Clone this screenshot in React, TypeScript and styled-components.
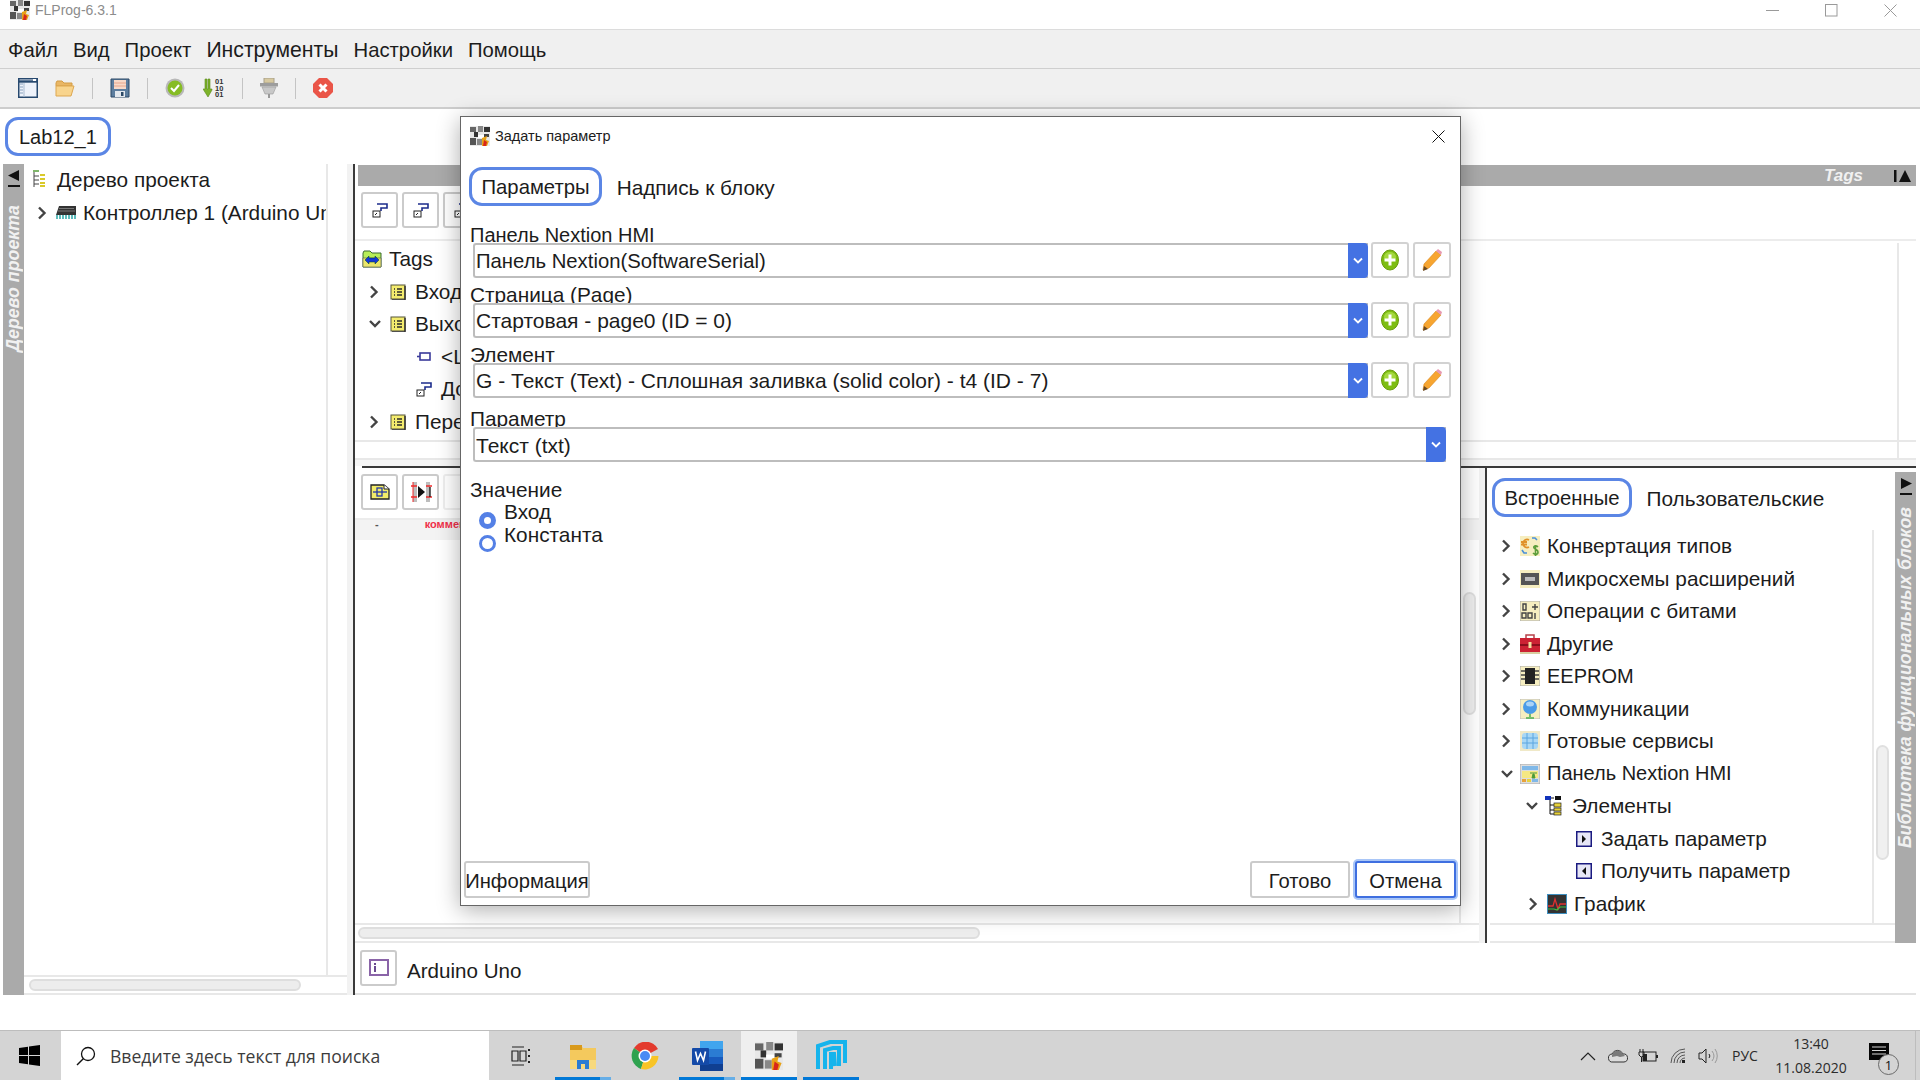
import React from "react";
import styled, { createGlobalStyle } from "styled-components";

const GlobalStyle = createGlobalStyle`
	html, body {
		margin: 0;
		padding: 0;
		background: #fff;
	}
	* {
		box-sizing: border-box;
	}
`;

const uiFont = `"Liberation Sans", Arial, sans-serif`;
const winFont = `"Open Sans", "Noto Sans", sans-serif`;

const Page = styled.div`
	position: relative;
	width: 1920px;
	height: 1080px;
	overflow: hidden;
	display: flex;
	flex-direction: column;
	background: #fff;
	font-family: ${uiFont};
	font-size: 20.8px;
	color: #1c1c1c;
`;

/* window chrome */
const TitleBar = styled.div`
	height: 29px;
	display: flex;
	align-items: flex-start;
	padding-left: 10px;
	flex-shrink: 0;
`;
const TitleText = styled.span`
	margin-left: 5px;
	font-size: 14px;
	line-height: 20px;
	color: #8c8c8c;
`;
const Caption = styled.div`
	margin-left: auto;
	display: flex;
	height: 20px;
	padding-top: 4px;
	padding-right: 23px;
	gap: 46px;
`;
const MenuBar = styled.div`
	height: 40px;
	flex-shrink: 0;
	display: flex;
	align-items: center;
	gap: 15px;
	padding: 2px 0 0 8px;
	background: #f0f0f0;
	border-top: 1px solid #dcdcdc;
	border-bottom: 1px solid #cfcfcf;
`;
const MenuItem = styled.span<{ $wide?: boolean }>`
	font-size: ${(p) => (p.$wide ? "21.2px" : "20.3px")};
`;
const ToolBar = styled.div`
	height: 40px;
	flex-shrink: 0;
	display: flex;
	align-items: center;
	gap: 17.1px;
	padding: 0 0 0 18px;
	background: #f0f0f0;
	border-bottom: 2px solid #cdcdcd;
`;
const ToolSep = styled.div`
	width: 1px;
	height: 21px;
	background: #c4c4c4;
`;
const ProjectTabs = styled.div`
	height: 55px;
	flex-shrink: 0;
	padding: 8px 0 0 5px;
`;
const Pill = styled.div<{ $active?: boolean }>`
	display: inline-flex;
	align-items: center;
	height: 39px;
	padding: 2px 9.5px 0;
	border: 3px solid ${(p) => (p.$active ? "#5b86e5" : "transparent")};
	border-radius: 13px;
	background: #fff;
	font-size: ${(p) => (p.$active ? "20.3px" : "inherit")};
	white-space: nowrap;
`;
const ProjectPill = styled(Pill)`
	padding: 2px 11px 0;
	font-size: 20px;
`;

/* main area */
const Workspace = styled.div`
	height: 832px;
	flex-shrink: 0;
	display: flex;
	padding: 0 4px 1px 3px;
`;
const SideStrip = styled.div<{ $inset?: number }>`
	width: 21px;
	flex-shrink: 0;
	margin-top: ${(p) => p.$inset ?? 0}px;
	display: flex;
	flex-direction: column;
	align-items: center;
	background: #aaaaaa;
	padding-top: 5px;
`;
const StripText = styled.div<{ $gap: number }>`
	margin-top: ${(p) => p.$gap}px;
	writing-mode: vertical-rl;
	transform: rotate(180deg);
	font-size: 17.8px;
	font-weight: bold;
	font-style: italic;
	line-height: 21px;
	color: #f1f1f1;
	white-space: nowrap;
`;
const LeftPane = styled.div`
	width: 323px;
	flex-shrink: 0;
	display: flex;
	flex-direction: column;
`;
const LeftBody = styled.div`
	flex: 1;
	display: flex;
	min-height: 0;
`;
const TreeList = styled.div`
	flex: 1;
	min-width: 0;
	overflow: hidden;
`;
const VTrack = styled.div<{ $w: number }>`
	width: ${(p) => p.$w}px;
	flex-shrink: 0;
	border-left: 2px solid #e8e8e8;
	padding-left: 2px;
`;
const VThumb = styled.div<{ $top: number; $h: number }>`
	margin-top: ${(p) => p.$top}px;
	width: 13px;
	height: ${(p) => p.$h}px;
	background: #f0f0f0;
	border: 2px solid #e0e0e0;
	border-radius: 7px;
`;
const LeftFoot = styled.div`
	height: 20px;
	flex-shrink: 0;
	display: flex;
	border-top: 2px solid #e8e8e8;
	border-bottom: 2px solid #e8e8e8;
	padding-left: 5px;
`;
const HThumb = styled.div<{ $w: number }>`
	width: ${(p) => p.$w}px;
	height: 12px;
	margin-top: 2px;
	background: #ededed;
	border: 2px solid #dedede;
	border-radius: 7px;
`;
const GutterGap = styled.div`
	width: 6px;
	flex-shrink: 0;
	background: #f2f2f2;
`;
const DarkLine = styled.div`
	width: 2px;
	flex-shrink: 0;
	background: #3a3a3a;
`;
const Center = styled.div`
	flex: 1;
	min-width: 0;
	display: flex;
	flex-direction: column;
`;
const GrayHeader = styled.div`
	height: 21px;
	flex-shrink: 0;
	margin: 1px 0 0 3px;
	display: flex;
	align-items: center;
	justify-content: flex-end;
	gap: 31px;
	padding-right: 4px;
	background: #aaaaaa;
`;
const HeaderTitle = styled.span`
	font-size: 17px;
	font-weight: bold;
	font-style: italic;
	color: #f1f1f1;
`;
const ButtonRow = styled.div<{ $h: number }>`
	height: ${(p) => p.$h}px;
	flex-shrink: 0;
	display: flex;
	gap: 4px;
	padding: 6px 0 0 6px;
	border-bottom: 2px solid #ececec;
`;
const SquareButton = styled.div<{ $faint?: boolean }>`
	width: 37px;
	height: 36px;
	display: flex;
	align-items: center;
	justify-content: center;
	background: #fff;
	border: 2px solid ${(p) => (p.$faint ? "#eeeeee" : "#cbcbcb")};
	border-radius: 3px;
`;
const TagsBody = styled.div`
	height: 199px;
	flex-shrink: 0;
	display: flex;
	padding-top: 2px;
`;
const TagsFoot = styled.div`
	height: 20px;
	flex-shrink: 0;
	display: flex;
	justify-content: flex-end;
	border-top: 2px solid #e8e8e8;
	border-bottom: 2px solid #e8e8e8;
`;
const FootCell = styled.div`
	width: 19px;
	border-left: 2px solid #e8e8e8;
`;
const ThinGap = styled.div`
	height: 6px;
	flex-shrink: 0;
	background: #f6f6f6;
`;
const ThickLine = styled.div`
	height: 2px;
	flex-shrink: 0;
	margin-left: 7px;
	background: #3a3a3a;
`;
const Lower = styled.div`
	flex: 1;
	min-height: 0;
	display: flex;
`;
const Editor = styled.div`
	width: 1124px;
	flex-shrink: 0;
	display: flex;
	flex-direction: column;
`;
const CommentBand = styled.div`
	height: 20px;
	flex-shrink: 0;
	display: flex;
	gap: 46px;
	padding-left: 20px;
	overflow: hidden;
	background: #f3f3f3;
	font-size: 11px;
	font-weight: bold;
	line-height: 8px;
	color: #f0304a;
`;
const Dash = styled.span`
	color: #555;
`;
const EditorCanvas = styled.div`
	flex: 1;
	min-height: 0;
	display: flex;
	justify-content: flex-end;
`;
const EditorFoot = styled.div`
	height: 20px;
	flex-shrink: 0;
	padding-left: 3px;
	border-top: 2px solid #e8e8e8;
	border-bottom: 2px solid #e8e8e8;
`;
const Library = styled.div`
	flex: 1;
	min-width: 0;
	display: flex;
	padding-left: 3px;
`;
const LibraryMain = styled.div`
	flex: 1;
	min-width: 0;
	display: flex;
	flex-direction: column;
`;
const TabRow = styled.div<{ $left: number; $top: number }>`
	display: flex;
	gap: 2px;
	padding: ${(p) => p.$top}px 0 0 ${(p) => p.$left}px;
	flex-shrink: 0;
`;
const LibraryBody = styled.div`
	flex: 1;
	min-height: 0;
	margin-top: 13px;
	display: flex;
`;
const LibraryFoot = styled.div`
	height: 20px;
	flex-shrink: 0;
	border-top: 2px solid #e8e8e8;
	border-bottom: 2px solid #e8e8e8;
`;
const ArduinoRow = styled.div`
	height: 52px;
	flex-shrink: 0;
	display: flex;
	align-items: center;
	gap: 10px;
	padding-left: 5px;
	border-bottom: 2px solid #e2e2e2;
`;
const ArduinoLabel = styled.span`
	padding-top: 6px;
	font-size: 20.6px;
`;
const Blank = styled.div`
	height: 34px;
	flex-shrink: 0;
`;

/* tree rows */
const Row = styled.div<{ $indent: number }>`
	height: 32.5px;
	display: flex;
	align-items: center;
	padding-left: ${(p) => p.$indent}px;
	white-space: nowrap;
`;
const ChevronSlot = styled.span`
	width: 19px;
	flex-shrink: 0;
	display: flex;
	align-items: center;
`;
const IconSlot = styled.span`
	width: 20px;
	height: 20px;
	flex-shrink: 0;
	display: flex;
	align-items: center;
	justify-content: center;
`;
const RowLabel = styled.span<{ $narrow?: boolean }>`
	margin-left: 7px;
	font-size: ${(p) => (p.$narrow ? "20px" : "inherit")};
`;

/* dialog */
const Dialog = styled.div`
	position: absolute;
	left: 460px;
	top: 116px;
	width: 1001px;
	height: 790px;
	display: flex;
	flex-direction: column;
	background: #fff;
	border: 1px solid #666;
	box-shadow: 0 4px 22px rgba(0, 0, 0, 0.32);
`;
const DialogTitle = styled.div`
	height: 38px;
	flex-shrink: 0;
	display: flex;
	align-items: center;
	padding: 0 15px 0 9px;
	font-size: 14.5px;
`;
const DialogTitleText = styled.span`
	margin-left: 5px;
`;
const CloseX = styled.span`
	margin-left: auto;
	display: flex;
`;
const ParamBlock = styled.div<{ $gap: number }>`
	margin-top: ${(p) => p.$gap}px;
	padding-left: 9px;
`;
const ParamLabel = styled.div<{ $narrow?: boolean }>`
	height: 25px;
	line-height: 34px;
	overflow: hidden;
	font-size: ${(p) => (p.$narrow ? "20px" : "inherit")};
	white-space: nowrap;
`;
const ParamRow = styled.div<{ $right: number }>`
	display: flex;
	gap: 3px;
	margin-left: 3px;
	padding-right: ${(p) => p.$right}px;
`;
const ComboBox = styled.div`
	flex: 1;
	min-width: 0;
	height: 35px;
	display: flex;
	align-items: center;
	padding-left: 1px;
	background: #fff;
	border: 2px solid #bdbdbd;
	border-right: none;
	border-radius: 3px 0 0 3px;
	white-space: nowrap;
`;
const ComboText = styled.span<{ $narrow?: boolean; $low?: boolean }>`
	padding-top: ${(p) => (p.$low ? "2px" : "1px")};
	font-size: ${(p) => (p.$narrow ? "20.3px" : "21px")};
`;
const ComboCaret = styled.span`
	margin-left: auto;
	width: 20px;
	height: 35px;
	display: flex;
	align-items: center;
	justify-content: center;
	background: #4472e3;
	border-radius: 0 4px 4px 0;
`;
const SmallButton = styled.div`
	width: 38px;
	height: 36px;
	margin-top: -1px;
	display: flex;
	align-items: center;
	justify-content: center;
	background: #fff;
	border: 2px solid #d2d2d2;
	border-radius: 3px;
	& + & {
		margin-left: 1px;
	}
`;
const ValueLabel = styled.div`
	margin: 16px 0 0 9px;
	height: 21.5px;
	line-height: 24px;
`;
const RadioRow = styled.div`
	height: 23.5px;
	display: flex;
	align-items: flex-start;
	padding-left: 18px;
	line-height: 23px;
`;
const RadioDot = styled.span<{ $on?: boolean }>`
	width: 17px;
	height: 17px;
	margin-top: 12px;
	margin-right: 8px;
	flex-shrink: 0;
	border-radius: 50%;
	border: ${(p) => (p.$on ? "5px" : "3px")} solid #5480e6;
	background: #fff;
`;
const DialogFoot = styled.div`
	margin-top: auto;
	display: flex;
	align-items: center;
	gap: 5px;
	padding: 0 4px 7px 3px;
`;
const FootButton = styled.div<{ $focus?: boolean; $push?: boolean }>`
	height: 37px;
	display: flex;
	align-items: center;
	justify-content: center;
	padding: 3px 0 0;
	font-size: 20.2px;
	background: #fff;
	border: 2px solid ${(p) => (p.$focus ? "#3f6fe0" : "#cbcbcb")};
	border-radius: 3px;
	box-shadow: ${(p) => (p.$focus ? "0 0 0 2px #a9c6f7" : "none")};
	margin-left: ${(p) => (p.$push ? "auto" : "0")};
`;
const InfoButton = styled(FootButton)`
	width: 126px;
`;
const ReadyButton = styled(FootButton)`
	width: 100px;
`;
const CancelButton = styled(FootButton)`
	width: 101px;
`;

/* taskbar */
const TaskBar = styled.div`
	height: 50px;
	flex-shrink: 0;
	display: flex;
	align-items: stretch;
	background: #d4d4d4;
	border-top: 1px solid #bdbdbd;
	font-family: ${winFont};
`;
const StartCell = styled.div`
	width: 61px;
	display: flex;
	align-items: center;
	justify-content: center;
	padding-right: 2px;
`;
const SearchBox = styled.div`
	width: 428px;
	display: flex;
	align-items: center;
	gap: 14px;
	padding-left: 15px;
	background: #fff;
	font-size: 17.6px;
	color: #3c3c3c;
`;
const TaskViewCell = styled.div`
	width: 63px;
	display: flex;
	align-items: center;
	justify-content: center;
`;
const TaskButton = styled.div<{ $active?: boolean; $split?: boolean; $running?: boolean }>`
	width: 56px;
	margin: 0 3px;
	display: flex;
	align-items: center;
	justify-content: center;
	background-color: ${(p) => (p.$active ? "#efefef" : "transparent")};
	background-image: ${(p) =>
		p.$split
			? "linear-gradient(to right, #0078d7 80%, #66aee7 80%)"
			: p.$running
				? "linear-gradient(#0078d7, #0078d7)"
				: "none"};
	background-size: 100% 3px;
	background-position: bottom;
	background-repeat: no-repeat;
`;
const Tray = styled.div`
	margin-left: auto;
	display: flex;
	align-items: stretch;
`;
const TrayIcon = styled.div`
	width: 30px;
	display: flex;
	align-items: center;
	justify-content: center;
`;
const TrayLang = styled.div`
	width: 44px;
	display: flex;
	align-items: center;
	justify-content: center;
	font-size: 14px;
	color: #2b2b2b;
`;
const Clock = styled.div`
	width: 88px;
	display: flex;
	flex-direction: column;
	align-items: center;
	justify-content: center;
	gap: 5px;
	font-size: 14px;
	line-height: 19px;
	color: #2b2b2b;
`;
const ActionCell = styled.div`
	position: relative;
	width: 48px;
	display: flex;
	align-items: center;
	justify-content: center;
	padding-bottom: 7px;
`;
const Badge = styled.span`
	position: absolute;
	left: 23px;
	top: 23px;
	width: 21px;
	height: 21px;
	display: flex;
	align-items: center;
	justify-content: center;
	border: 1px solid #6a6a6a;
	border-radius: 50%;
	background: #d4d4d4;
	font-size: 13px;
	color: #111;
`;
const ShowDesktop = styled.div`
	width: 5px;
	margin-left: 12px;
	border-left: 1px solid #bdbdbd;
`;

/* drawings */
const FlprogIcon: React.FC<{ size: number }> = ({ size }) => (
	<svg width={size} height={size} viewBox="0 0 20 20">
		<rect x="0" y="0" width="20" height="20" fill="#e8e8e8" />
		<rect x="0" y="1" width="6" height="5" fill="#666" />
		<rect x="8" y="0" width="5" height="6" fill="#888" />
		<rect x="14" y="1" width="6" height="5" fill="#333" />
		<rect x="4" y="6" width="4" height="5" fill="#333" />
		<rect x="0" y="12" width="6" height="7" fill="#555" />
		<rect x="8" y="9" width="6" height="3" fill="#fff" />
		<rect x="7" y="13" width="5" height="6" fill="#888" />
		<rect x="14" y="8" width="5" height="3" fill="#444" />
		<path d="M12 12l5-2-1 4 3 1-2 5h-5z" fill="#e8a216" />
		<path d="M14 14l3 2-1 4h-3z" fill="#d8261a" />
	</svg>
);
const Chevron: React.FC<{ open?: boolean }> = ({ open }) =>
	open ? (
		<svg width="12" height="10" viewBox="0 0 12 10">
			<path d="M1 2l5 5 5-5" fill="none" stroke="#444" strokeWidth="2.4" />
		</svg>
	) : (
		<svg width="10" height="14" viewBox="0 0 10 14">
			<path d="M2 1.5l5.500 5.500-5.500 5.500" fill="none" stroke="#444" strokeWidth="2.4" />
		</svg>
	);
const ListIcon = () => (
	<svg width="16" height="16" viewBox="0 0 16 16">
		<rect x="1" y="1" width="14" height="14" fill="#f4ec6e" stroke="#55553a" />
		<path d="M15 2v14H2" fill="none" stroke="#333" strokeWidth="1.500" />
		<path d="M4 5h1M7 5h5M4 8h1M7 8h5M4 11h1M7 11h5" stroke="#2a2a2a" strokeWidth="1.300" />
	</svg>
);
const TreeDocIcon = () => (
	<svg width="15" height="20" viewBox="0 0 15 20">
		<path d="M1 2v15M1 6h5M1 10h5M1 14h5" stroke="#444" fill="none" />
		<rect x="0" y="0" width="6" height="2" fill="#7fb56a" />
		<path d="M7 5h5M7 9h5M7 13h5M7 16h5" stroke="#d9c92a" strokeWidth="2" />
	</svg>
);
const ChipIcon = () => (
	<svg width="20" height="20" viewBox="0 0 20 20">
		<path d="M3 3h17v9H0z" fill="#333" />
		<path d="M3 5.500h15M2 8h17" stroke="#777" />
		<path d="M1 12v4M4 12v4M7 12v4M10 12v4M13 12v4M16 12v4M19 12v4" stroke="#2aa6a6" strokeWidth="1.500" />
	</svg>
);
const LinkIcon = () => (
	<svg width="16" height="16" viewBox="0 0 16 16">
		<path d="M5 2h10v4h-6v3" fill="none" stroke="#1c2c8c" strokeWidth="1.600" />
		<rect x="1" y="9" width="7" height="6" fill="#fff" stroke="#222" />
		<path d="M3 13l2-2" stroke="#222" />
	</svg>
);
const TagsFolderIcon = () => (
	<svg width="20" height="20" viewBox="0 0 20 20">
		<path d="M1 4l1-2h6l2 2h9v14H1z" fill="#b8ee58" stroke="#3a6a30" />
		<path d="M1 9h18v9H1z" fill="#e9e56a" stroke="#555" strokeWidth=".6" />
		<path d="M3 11l4-4v2h6V7l4 4-4 4v-2H7v2z" fill="#1236d8" stroke="#042" strokeWidth=".5" />
	</svg>
);
const WireIcon = () => (
	<svg width="14" height="10" viewBox="0 0 14 10">
		<rect x="3" y="1" width="10" height="7" fill="#fff" stroke="#3a3a9a" strokeWidth="1.600" />
		<path d="M0 4.500h3" stroke="#3a3a9a" strokeWidth="1.600" />
	</svg>
);
const BlockIcon = () => (
	<svg width="20" height="18" viewBox="0 0 20 18">
		<path d="M1 2h13l5 4v10H1z" fill="#f3ec6a" stroke="#222" strokeWidth="1.300" />
		<path d="M14 2v4h5" fill="#fff" stroke="#222" />
		<rect x="7" y="5" width="5" height="8" fill="none" stroke="#2338a8" strokeWidth="1.300" />
		<path d="M3 9h14" stroke="#2338a8" strokeWidth="1.300" />
	</svg>
);
const JoinIcon = () => (
	<svg width="22" height="22" viewBox="0 0 22 22">
		<rect x="3" y="1" width="4" height="20" fill="#bdbdbd" />
		<rect x="16" y="1" width="4" height="20" fill="#bdbdbd" />
		<path d="M8 5l7 6-7 6z" fill="#111" />
		<path d="M1 5h6M1 16h6M16 5h6M16 16h6" stroke="#f02a2a" strokeWidth="1.500" />
		<path d="M3 1v20" stroke="#f02a2a" />
		<path d="M20 6v10" stroke="#111" strokeWidth="1.300" />
	</svg>
);
const PlusIcon = () => (
	<svg width="18" height="22" viewBox="0 0 18 22">
		<ellipse cx="9" cy="11" rx="8.500" ry="10" fill="#7dbd12" stroke="#6a9c10" />
		<ellipse cx="9" cy="8" rx="6" ry="5" fill="#a4d83e" />
		<path d="M9 5.500v11M3.500 11h11" stroke="#fff" strokeWidth="3" />
	</svg>
);
const PencilIcon = () => (
	<svg width="21" height="24" viewBox="0 0 21 24">
		<path d="M1 22l1-6L14 3l5 4L7 20z" fill="#f7a530" stroke="#d9861c" strokeWidth=".6" />
		<path d="M14 3l2-2 4 3-1 3z" fill="#e79ab2" />
		<path d="M1 23l1-5 4 3z" fill="#6b4a22" />
	</svg>
);
const CaretDown = () => (
	<svg width="10" height="8" viewBox="0 0 10 8">
		<path d="M1 1.500l4 4 4-4" fill="none" stroke="#fff" strokeWidth="1.800" />
	</svg>
);
const StripArrow: React.FC<{ dir: "left" | "right" }> = ({ dir }) => (
	<svg width="14" height="20" viewBox="0 0 14 20">
		<path d={dir === "left" ? "M12 1v11L1 6.500z" : "M2 1v11l11-5.500z"} fill="#111" />
		<rect x="1" y="16" width="12" height="2" fill="#111" />
	</svg>
);
const HeaderArrow = () => (
	<svg width="18" height="14" viewBox="0 0 18 14">
		<rect x="0" y="1" width="2.500" height="12" fill="#111" />
		<path d="M5 13L11 1l6 12z" fill="#111" />
	</svg>
);
const ArduinoIcon = () => (
	<svg width="20" height="18" viewBox="0 0 20 18">
		<rect x="1" y="1" width="18" height="15" fill="#fff" stroke="#8a64a8" strokeWidth="2" />
		<rect x="5" y="7" width="2" height="6" fill="#6a4a90" />
		<rect x="5" y="4" width="2" height="2" fill="#6a4a90" />
	</svg>
);
const WinCaption: React.FC<{ kind: "min" | "max" | "close" }> = ({ kind }) => (
	<svg width="13" height="13" viewBox="0 0 13 13">
		{kind === "min" && <path d="M0 6.500h13" stroke="#9a9a9a" />}
		{kind === "max" && <rect x=".5" y=".5" width="11.500" height="11.500" fill="none" stroke="#9a9a9a" />}
		{kind === "close" && <path d="M.5 .5l12 12M12.500 .5l-12 12" stroke="#9a9a9a" />}
	</svg>
);

const NewIcon = () => (
	<svg width="20" height="20" viewBox="0 0 20 20">
		<rect x=".75" y=".75" width="18.500" height="18.500" fill="#eef2fa" stroke="#27496f" strokeWidth="1.500" />
		<path d="M1 3.500h18" stroke="#27496f" strokeWidth="2.400" />
		<path d="M2 6h3M2 9h3M2 12h3M2 15h3" stroke="#86a0bd" />
		<path d="M6 5v14" stroke="#a9bbd0" />
		<rect x="15" y="1" width="3" height="2" fill="#fff" />
	</svg>
);
const OpenIcon = () => (
	<svg width="20" height="17" viewBox="0 0 20 17">
		<path d="M1 3l1-2h5l2 2h8v3H1z" fill="#e9b664" stroke="#d49c45" />
		<path d="M1 16V6h18l-3 10z" fill="#f8d48d" stroke="#dda750" />
	</svg>
);
const SaveIcon = () => (
	<svg width="20" height="20" viewBox="0 0 20 20">
		<path d="M1 1h18v18H1z" fill="#5d7e9f" stroke="#2c4966" />
		<rect x="4" y="2" width="12" height="9" fill="#f7d9c8" />
		<path d="M4 5h12M4 8h12" stroke="#e8a68c" />
		<rect x="5" y="13" width="10" height="6" fill="#e4e9ef" />
		<rect x="11" y="14" width="2.500" height="4" fill="#2c4966" />
	</svg>
);
const CheckIcon = () => (
	<svg width="20" height="20" viewBox="0 0 20 20">
		<circle cx="10" cy="10" r="9.500" fill="#b8b8b8" />
		<circle cx="10" cy="10" r="7.500" fill="#86bc24" />
		<path d="M6 10l3 3 5-6" fill="none" stroke="#fff" strokeWidth="2" />
	</svg>
);
const BitsText = styled.text`
	font-family: ${uiFont};
	font-size: 7.500px;
	font-weight: bold;
	fill: #333;
`;
const DownloadIcon = () => (
	<svg width="22" height="20" viewBox="0 0 22 20">
		<path d="M2 1h2v10h1V1h2v10h2v1l-4 7-5-8h2z" fill="#7db32a" stroke="#5b8a1c" strokeWidth=".6" />
		<BitsText x="12" y="6">01</BitsText>
		<BitsText x="12" y="12.500">10</BitsText>
		<BitsText x="12" y="19">01</BitsText>
	</svg>
);
const SerialIcon = () => (
	<svg width="18" height="20" viewBox="0 0 18 20">
		<rect x="4" y="0" width="10" height="5" fill="#d7c9a0" stroke="#a8a08a" />
		<rect x="0" y="5" width="18" height="3.500" fill="#9d9d9d" />
		<path d="M2 9h14l-3 7H5z" fill="#c8c8c8" stroke="#999" strokeWidth=".6" />
		<rect x="8" y="16" width="2" height="4" fill="#999" />
	</svg>
);
const StopIcon = () => (
	<svg width="20" height="20" viewBox="0 0 20 20">
		<path d="M6 0h8l6 6v8l-6 6H6l-6-6V6z" fill="#ea5548" />
		<path d="M6.500 6.500l7 7M13.500 6.500l-7 7" stroke="#fff" strokeWidth="3" />
	</svg>
);

const MoneyIcon = () => (
	<svg width="20" height="20" viewBox="0 0 20 20">
		<rect width="20" height="20" fill="#f6eec0" />
		<path d="M9 4a4 4 0 1 0 0 7M1 6h6M1 8.500h6" fill="none" stroke="#e0922a" strokeWidth="1.800" />
		<path d="M18 11c-2-2-5-1-4 1s4 1 4 4-3 3-5 1M15.500 9v11" fill="none" stroke="#5d9e3a" strokeWidth="1.600" />
		<path d="M12 2h3l2 2M2 14l2 3h3" fill="none" stroke="#4a90d9" strokeWidth="1.600" />
	</svg>
);
const BoardIcon = () => (
	<svg width="20" height="20" viewBox="0 0 20 20">
		<rect y="1" width="20" height="18" fill="#f6eec0" />
		<rect x="1" y="4" width="18" height="12" fill="#555" />
		<rect x="5" y="8" width="10" height="4" fill="#bbb" />
	</svg>
);
const BitsIcon = () => (
	<svg width="20" height="20" viewBox="0 0 20 20">
		<rect width="20" height="20" fill="#f6eec0" stroke="#aaa" />
		<path d="M3 3h3v6H3zM12 6h6M15 3v6M2 12h4v5H2zM8 12h4v5H8zM15 12v6" fill="none" stroke="#444" strokeWidth="1.400" />
	</svg>
);
const ToolboxIcon = () => (
	<svg width="20" height="20" viewBox="0 0 20 20">
		<path d="M6 5V1h8v4" fill="none" stroke="#b7414a" strokeWidth="1.500" />
		<rect y="4" width="20" height="14" fill="#cc2233" />
		<rect y="10" width="20" height="2" fill="#8a0f1c" />
		<rect x="8.500" y="8" width="3" height="6" fill="#f3e1a0" />
		<rect y="18" width="20" height="2" fill="#d8cfa0" />
	</svg>
);
const EepromIcon = () => (
	<svg width="20" height="20" viewBox="0 0 20 20">
		<rect width="20" height="20" fill="#f6eec0" stroke="#aaa" />
		<rect x="5" y="2" width="10" height="16" fill="#222" />
		<path d="M1 5h4M1 9h4M1 13h4M15 5h4M15 9h4M15 13h4" stroke="#444" strokeWidth="1.500" />
	</svg>
);
const GlobeIcon = () => (
	<svg width="20" height="20" viewBox="0 0 20 20">
		<rect width="20" height="20" fill="#f6eec0" stroke="#bbb" />
		<circle cx="10" cy="8" r="7" fill="#4a9be8" />
		<ellipse cx="10" cy="5" rx="4" ry="2.500" fill="#a9d3f7" />
		<path d="M10 15v3M6 19h8" stroke="#4caf50" strokeWidth="1.500" />
	</svg>
);
const GridGlobeIcon = () => (
	<svg width="20" height="20" viewBox="0 0 20 20">
		<rect width="20" height="20" fill="#f0e9c8" />
		<rect x="2" y="2" width="16" height="16" rx="3" fill="#a8d7f5" />
		<path d="M2 7h16M2 12h16M7 2v16M13 2v16" stroke="#5aa6e0" />
	</svg>
);
const NextionIcon = () => (
	<svg width="20" height="20" viewBox="0 0 20 20">
		<rect width="20" height="20" fill="#ddd" stroke="#aaa" />
		<rect x="2" y="2" width="16" height="4" fill="#7fb8e8" />
		<rect x="2" y="7" width="16" height="7" fill="#f5e884" />
		<path d="M12 14l1-4h1l1 4zM10 9h7" stroke="#4a9a3a" fill="#4a9a3a" />
		<rect x="2" y="15" width="4" height="3" fill="#e8a23a" />
		<rect x="7" y="15" width="4" height="3" fill="#e8d23a" />
		<rect x="12" y="15" width="6" height="3" fill="#7fb8e8" />
	</svg>
);
const ElementsIcon = () => (
	<svg width="20" height="20" viewBox="0 0 20 20">
		<rect x="0" y="0" width="6" height="4" fill="#1133bb" />
		<path d="M5 4v14h4M5 9h4M5 14h4M9 2H6" fill="none" stroke="#111" />
		<rect x="10" y="0" width="6" height="4" fill="#111" />
		<rect x="9" y="7" width="7" height="4" fill="#e8d23a" stroke="#222" strokeWidth=".7" />
		<rect x="9" y="12" width="7" height="3" fill="#e8d23a" stroke="#222" strokeWidth=".7" />
		<rect x="9" y="16" width="7" height="3" fill="#e8d23a" stroke="#222" strokeWidth=".7" />
	</svg>
);
const SetIcon: React.FC<{ left?: boolean }> = ({ left }) => (
	<svg width="16" height="16" viewBox="0 0 16 16">
		<rect x=".75" y=".75" width="14.500" height="14.500" fill="#e6e6f6" stroke="#1a1a80" strokeWidth="1.500" />
		<path d={left ? "M10 4v8L6 8z" : "M6 4v8l4-4z"} fill="#111" />
	</svg>
);
const GraphIcon = () => (
	<svg width="20" height="20" viewBox="0 0 20 20">
		<rect x=".5" y=".5" width="19" height="19" fill="#333" stroke="#3e8fc0" />
		<path d="M1 12h5l2-7 3 10 2-5h6" fill="none" stroke="#e03030" strokeWidth="1.300" />
		<path d="M1 15h6l3 1 3-3h6" fill="none" stroke="#3ec040" strokeWidth="1.200" />
	</svg>
);

const WindowsLogo = () => (
	<svg width="21" height="21" viewBox="0 0 21 21">
		<path d="M0 3l9-1.300v8.300H0zM10 1.500L21 0v10H10zM0 11h9v8.300L0 18zM10 11h11v10l-11-1.500z" fill="#000" />
	</svg>
);
const SearchGlass = () => (
	<svg width="20" height="20" viewBox="0 0 20 20">
		<circle cx="12" cy="8" r="6.500" fill="none" stroke="#111" strokeWidth="1.300" />
		<path d="M7.500 12.500L1 19" stroke="#111" strokeWidth="1.400" />
	</svg>
);
const TaskViewIcon = () => (
	<svg width="20" height="20" viewBox="0 0 20 20">
		<path d="M1 1h12M1 19h12M1 5h6v10H1zM9 5h6v10H9z" fill="none" stroke="#222" strokeWidth="1.200" />
		<path d="M18 3v2M18 9v2M18 15v2" stroke="#222" strokeWidth="2" />
	</svg>
);
const ExplorerIcon = () => (
	<svg width="28" height="28" viewBox="0 0 28 28">
		<path d="M1 3h11l2 3h13v21H1z" fill="#f4c95d" />
		<rect x="1" y="3" width="12" height="5" fill="#d99a1c" />
		<rect x="1" y="18" width="26" height="9" fill="#f7d97e" />
		<path d="M8 27v-9h12v9h-4v-5h-4v5z" fill="#2b7cd3" />
	</svg>
);
const ChromeIcon = () => (
	<svg width="28" height="28" viewBox="0 0 28 28">
		<path d="M14 14L3 6a14 14 0 0 1 24 1z" fill="#e33b2e" />
		<path d="M14 14L3 6a14 14 0 0 0 7 21z" fill="#2fa24f" />
		<path d="M14 14h13.500a14 14 0 0 1-17.500 13z" fill="#f8c427" />
		<circle cx="14" cy="14" r="6.500" fill="#fff" />
		<circle cx="14" cy="14" r="5" fill="#4a8af4" />
	</svg>
);
const WordIcon = () => (
	<svg width="31" height="30" viewBox="0 0 31 30">
		<rect x="8" y="0" width="23" height="8" fill="#41a5ee" />
		<rect x="8" y="8" width="23" height="8" fill="#2b7cd3" />
		<rect x="8" y="16" width="23" height="7" fill="#185abd" />
		<rect x="8" y="23" width="23" height="7" fill="#103f91" />
		<rect x="0" y="7" width="17" height="17" rx="1" fill="#144aa8" />
		<path d="M3.500 10.500l2 9 3-7 3 7 2-9" fill="none" stroke="#fff" strokeWidth="1.600" />
	</svg>
);
const NextionAppIcon = () => (
	<svg width="32" height="32" viewBox="0 0 32 32">
		<path d="M3 29V6l12-4h15v21M10 29V10l8-2h6v18M16 29V14h3l1 12" fill="none" stroke="#16b4ec" strokeWidth="4" />
	</svg>
);
const TrayChevron = () => (
	<svg width="16" height="10" viewBox="0 0 16 10">
		<path d="M1 9l7-7 7 7" fill="none" stroke="#222" strokeWidth="1.200" />
	</svg>
);
const CloudIcon = () => (
	<svg width="20" height="14" viewBox="0 0 20 14">
		<path d="M5 13a4 4 0 0 1-1-8 6 6 0 0 1 11 0 4 4 0 0 1 1 8z" fill="#dcdcdc" stroke="#333" />
		<path d="M4 6a6 6 0 0 1 11-1l2 2-5 1-3-1-5 1z" fill="#7a7a7a" />
	</svg>
);
const BatteryIcon = () => (
	<svg width="20" height="16" viewBox="0 0 20 16">
		<rect x="5" y="4" width="13" height="9" fill="none" stroke="#222" />
		<rect x="18" y="7" width="2" height="3" fill="#222" />
		<rect x="5" y="6" width="4" height="7" fill="#222" />
		<path d="M1 4h5v3L4 9H3L1 7zM2 1v3M5 1v3M3.500 9v5" fill="none" stroke="#222" />
	</svg>
);
const WifiIcon = () => (
	<svg width="16" height="16" viewBox="0 0 16 16">
		<path d="M1 15A14 14 0 0 1 15 1M4 15A11 11 0 0 1 15 4M7 15A8 8 0 0 1 15 7M10 15a5 5 0 0 1 5-5" fill="none" stroke="#555" />
		<rect x="12" y="12" width="3" height="3" fill="#222" />
	</svg>
);
const VolumeIcon = () => (
	<svg width="20" height="16" viewBox="0 0 20 16">
		<path d="M1 5h3l4-4v14l-4-4H1z" fill="none" stroke="#222" />
		<path d="M11 6a3 3 0 0 1 0 4" fill="none" stroke="#222" />
		<path d="M14 3a8 8 0 0 1 0 10M17 1a12 12 0 0 1 0 14" fill="none" stroke="#999" />
	</svg>
);
const ActionIcon = () => (
	<svg width="20" height="18" viewBox="0 0 20 18">
		<path d="M0 0h20v17H0z" fill="#050505" />
		<path d="M3 4h14M3 7.500h14M3 11h14" stroke="#d4d4d4" />
	</svg>
);

const menuItems = ["Файл", "Вид", "Проект", "Инструменты", "Настройки", "Помощь"];

const libraryRows: { label: string; icon: React.ReactNode; narrow?: boolean }[] = [
	{ label: "Конвертация типов", icon: <MoneyIcon /> },
	{ label: "Микросхемы расширений", icon: <BoardIcon /> },
	{ label: "Операции с битами", icon: <BitsIcon /> },
	{ label: "Другие", icon: <ToolboxIcon /> },
	{ label: "EEPROM", icon: <EepromIcon />, narrow: true },
	{ label: "Коммуникации", icon: <GlobeIcon /> },
	{ label: "Готовые сервисы", icon: <GridGlobeIcon /> },
];

const paramRows: { label: string; value: string; gap: number; narrow?: boolean }[] = [
	{ label: "Панель Nextion HMI", value: "Панель Nextion(SoftwareSerial)", gap: 12, narrow: true },
	{ label: "Страница (Page)", value: "Стартовая - page0 (ID = 0)", gap: 0 },
	{ label: "Элемент", value: "G - Текст (Text) - Сплошная заливка (solid color) - t4 (ID - 7)", gap: 0 },
];

const App: React.FC = () => (
	<Page>
		<GlobalStyle />
		<TitleBar>
			<FlprogIcon size={20} />
			<TitleText>FLProg-6.3.1</TitleText>
			<Caption>
				<WinCaption kind="min" />
				<WinCaption kind="max" />
				<WinCaption kind="close" />
			</Caption>
		</TitleBar>
		<MenuBar>
			{menuItems.map((m) => (
				<MenuItem key={m} $wide={m === "Инструменты"}>{m}</MenuItem>
			))}
		</MenuBar>
		<ToolBar>
			<NewIcon />
			<OpenIcon />
			<ToolSep />
			<SaveIcon />
			<ToolSep />
			<CheckIcon />
			<DownloadIcon />
			<ToolSep />
			<SerialIcon />
			<ToolSep />
			<StopIcon />
		</ToolBar>
		<ProjectTabs>
			<ProjectPill $active>Lab12_1</ProjectPill>
		</ProjectTabs>

		<Workspace>
			<SideStrip>
				<StripArrow dir="left" />
				<StripText $gap={16}>Дерево проекта</StripText>
			</SideStrip>
			<LeftPane>
				<LeftBody>
					<TreeList>
						<Row $indent={6}>
							<IconSlot><TreeDocIcon /></IconSlot>
							<RowLabel>Дерево проекта</RowLabel>
						</Row>
						<Row $indent={13}>
							<ChevronSlot><Chevron /></ChevronSlot>
							<IconSlot><ChipIcon /></IconSlot>
							<RowLabel>Контроллер 1 (Arduino Uno)</RowLabel>
						</Row>
					</TreeList>
					<VTrack $w={21} />
				</LeftBody>
				<LeftFoot>
					<HThumb $w={272} />
				</LeftFoot>
			</LeftPane>
			<GutterGap />
			<DarkLine />

			<Center>
				<GrayHeader>
					<HeaderTitle>Tags</HeaderTitle>
					<HeaderArrow />
				</GrayHeader>
				<ButtonRow $h={55}>
					<SquareButton><LinkIcon /></SquareButton>
					<SquareButton><LinkIcon /></SquareButton>
					<SquareButton><LinkIcon /></SquareButton>
				</ButtonRow>
				<TagsBody>
					<TreeList>
						<Row $indent={7}>
							<IconSlot><TagsFolderIcon /></IconSlot>
							<RowLabel>Tags</RowLabel>
						</Row>
						<Row $indent={14}>
							<ChevronSlot><Chevron /></ChevronSlot>
							<IconSlot><ListIcon /></IconSlot>
							<RowLabel>Входы</RowLabel>
						</Row>
						<Row $indent={14}>
							<ChevronSlot><Chevron open /></ChevronSlot>
							<IconSlot><ListIcon /></IconSlot>
							<RowLabel>Выходы</RowLabel>
						</Row>
						<Row $indent={59}>
							<IconSlot><WireIcon /></IconSlot>
							<RowLabel>&lt;Lcd&gt;</RowLabel>
						</Row>
						<Row $indent={59}>
							<IconSlot><LinkIcon /></IconSlot>
							<RowLabel>Добавить</RowLabel>
						</Row>
						<Row $indent={14}>
							<ChevronSlot><Chevron /></ChevronSlot>
							<IconSlot><ListIcon /></IconSlot>
							<RowLabel>Переменные</RowLabel>
						</Row>
					</TreeList>
					<VTrack $w={19} />
				</TagsBody>
				<TagsFoot>
					<FootCell />
				</TagsFoot>
				<ThinGap />
				<ThickLine />
				<Lower>
					<Editor>
						<ButtonRow $h={52}>
							<SquareButton><BlockIcon /></SquareButton>
							<SquareButton><JoinIcon /></SquareButton>
							<SquareButton $faint />
						</ButtonRow>
						<CommentBand>
							<Dash>-</Dash>
							<span>комментарий</span>
						</CommentBand>
						<EditorCanvas>
							<VTrack $w={20}>
								<VThumb $top={52} $h={123} />
							</VTrack>
						</EditorCanvas>
						<EditorFoot>
							<HThumb $w={622} />
						</EditorFoot>
					</Editor>
					<GutterGap />
					<DarkLine />
					<Library>
						<LibraryMain>
							<TabRow $left={2} $top={10}>
								<Pill $active>Встроенные</Pill>
								<Pill>Пользовательские</Pill>
							</TabRow>
							<LibraryBody>
								<TreeList>
									{libraryRows.map((r) => (
										<Row $indent={11} key={r.label}>
											<ChevronSlot><Chevron /></ChevronSlot>
											<IconSlot>{r.icon}</IconSlot>
											<RowLabel $narrow={r.narrow}>{r.label}</RowLabel>
										</Row>
									))}
									<Row $indent={11}>
										<ChevronSlot><Chevron open /></ChevronSlot>
										<IconSlot><NextionIcon /></IconSlot>
										<RowLabel $narrow>Панель Nextion HMI</RowLabel>
									</Row>
									<Row $indent={36}>
										<ChevronSlot><Chevron open /></ChevronSlot>
										<IconSlot><ElementsIcon /></IconSlot>
										<RowLabel>Элементы</RowLabel>
									</Row>
									<Row $indent={84}>
										<IconSlot><SetIcon /></IconSlot>
										<RowLabel>Задать параметр</RowLabel>
									</Row>
									<Row $indent={84}>
										<IconSlot><SetIcon left /></IconSlot>
										<RowLabel>Получить параметр</RowLabel>
									</Row>
									<Row $indent={38}>
										<ChevronSlot><Chevron /></ChevronSlot>
										<IconSlot><GraphIcon /></IconSlot>
										<RowLabel>График</RowLabel>
									</Row>
								</TreeList>
								<VTrack $w={23}>
									<VThumb $top={215} $h={115} />
								</VTrack>
							</LibraryBody>
							<LibraryFoot />
						</LibraryMain>
						<SideStrip $inset={4}>
							<StripArrow dir="right" />
							<StripText $gap={10}>Библиотека функциональных блоков</StripText>
						</SideStrip>
					</Library>
				</Lower>
				<ArduinoRow>
					<SquareButton><ArduinoIcon /></SquareButton>
					<ArduinoLabel>Arduino Uno</ArduinoLabel>
				</ArduinoRow>
			</Center>
		</Workspace>
		<Blank />

		<TaskBar>
			<StartCell><WindowsLogo /></StartCell>
			<SearchBox>
				<SearchGlass />
				Введите здесь текст для поиска
			</SearchBox>
			<TaskViewCell><TaskViewIcon /></TaskViewCell>
			<TaskButton $split><ExplorerIcon /></TaskButton>
			<TaskButton><ChromeIcon /></TaskButton>
			<TaskButton $split><WordIcon /></TaskButton>
			<TaskButton $active $running><FlprogIcon size={28} /></TaskButton>
			<TaskButton $running><NextionAppIcon /></TaskButton>
			<Tray>
				<TrayIcon><TrayChevron /></TrayIcon>
				<TrayIcon><CloudIcon /></TrayIcon>
				<TrayIcon><BatteryIcon /></TrayIcon>
				<TrayIcon><WifiIcon /></TrayIcon>
				<TrayIcon><VolumeIcon /></TrayIcon>
				<TrayLang>РУС</TrayLang>
				<Clock>
					<span>13:40</span>
					<span>11.08.2020</span>
				</Clock>
				<ActionCell>
					<ActionIcon />
					<Badge>1</Badge>
				</ActionCell>
				<ShowDesktop />
			</Tray>
		</TaskBar>

		<Dialog>
			<DialogTitle>
				<FlprogIcon size={20} />
				<DialogTitleText>Задать параметр</DialogTitleText>
				<CloseX>
					<svg width="13" height="13" viewBox="0 0 13 13">
						<path d="M.5 .5l12 12M12.500 .5l-12 12" stroke="#111" />
					</svg>
				</CloseX>
			</DialogTitle>
			<TabRow $left={8} $top={12}>
				<Pill $active>Параметры</Pill>
				<Pill>Надпись к блоку</Pill>
			</TabRow>
			{paramRows.map((r) => (
				<ParamBlock $gap={r.gap} key={r.label}>
					<ParamLabel $narrow={r.narrow}>{r.label}</ParamLabel>
					<ParamRow $right={9}>
						<ComboBox>
							<ComboText $narrow={r.narrow}>{r.value}</ComboText>
							<ComboCaret><CaretDown /></ComboCaret>
						</ComboBox>
						<SmallButton><PlusIcon /></SmallButton>
						<SmallButton><PencilIcon /></SmallButton>
					</ParamRow>
				</ParamBlock>
			))}
			<ParamBlock $gap={4}>
				<ParamLabel>Параметр</ParamLabel>
				<ParamRow $right={14}>
					<ComboBox>
						<ComboText $low>Текст (txt)</ComboText>
						<ComboCaret><CaretDown /></ComboCaret>
					</ComboBox>
				</ParamRow>
			</ParamBlock>
			<ValueLabel>Значение</ValueLabel>
			<RadioRow>
				<RadioDot $on />
				Вход
			</RadioRow>
			<RadioRow>
				<RadioDot />
				Константа
			</RadioRow>
			<DialogFoot>
				<InfoButton>Информация</InfoButton>
				<ReadyButton $push>Готово</ReadyButton>
				<CancelButton $focus>Отмена</CancelButton>
			</DialogFoot>
		</Dialog>
	</Page>
);

export default App;
